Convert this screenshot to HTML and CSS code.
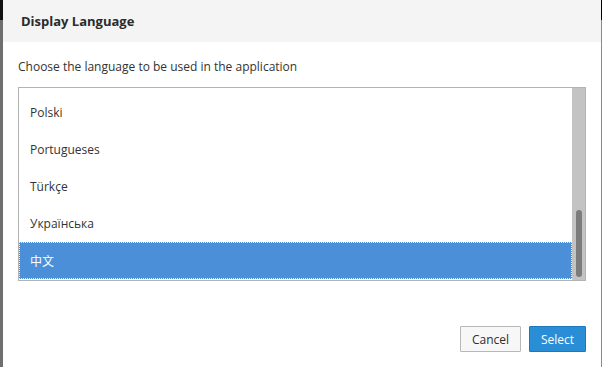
FILE: index.html
```html
<!DOCTYPE html>
<html>
<head>
<meta charset="utf-8">
<link rel="stylesheet" href="styles.css">
</head>
<body>
<div class="screen">
  <div class="edge-left"></div>
  <div class="dialog">
    <div class="header">Display Language</div>
    <div class="content">
      <p class="prompt">Choose the language to be used in the application</p>
      <div class="listbox">
        <ul class="items">
          <li class="item">Polski</li>
          <li class="item">Portugueses</li>
          <li class="item">Türkçe</li>
          <li class="item">Українська</li>
          <li class="item selected">中文</li>
        </ul>
        <div class="scrollbar"><div class="thumb"></div></div>
      </div>
      <div class="actions">
        <button class="btn btn-cancel">Cancel</button>
        <button class="btn btn-primary">Select</button>
      </div>
    </div>
  </div>
  <div class="edge-right"></div>
</div>
</body>
</html>
```
FILE: styles.css
```css
html, body {
  margin: 0;
  padding: 0;
  width: 602px;
  height: 367px;
  overflow: hidden;
  background: #ffffff;
}
.screen {
  display: flex;
  width: 602px;
  height: 367px;
  font-family: "Open Sans", "Noto Sans CJK SC", sans-serif;
  color: #2e3436;
}
.edge-left {
  width: 3px;
  flex: none;
  background: linear-gradient(#111111 0 20px, #6e6e6e 20px);
}
.edge-right {
  width: 1px;
  flex: none;
  background: linear-gradient(#000000 0 20px, #8a8a8a 20px);
}
.dialog {
  flex: 1;
  display: flex;
  flex-direction: column;
  background: #ffffff;
}
.header {
  height: 42px;
  flex: none;
  background: #f4f4f4;
  display: flex;
  align-items: center;
  padding-left: 18px;
  font-weight: 700;
  font-size: 13px;
  color: #2b2b2b;
}
.content {
  flex: 1;
  display: flex;
  flex-direction: column;
  padding: 0 15px 15px 15px;
}
.prompt {
  margin: 16px 0 12px 0;
  font-size: 12px;
  line-height: 17px;
  color: #333333;
}
.listbox {
  height: 192px;
  border: 1px solid #b3b3b3;
  display: flex;
  overflow: hidden;
}
.items {
  flex: 1;
  list-style: none;
  margin: 0;
  padding: 6px 0 0 0;
}
.item {
  height: 37px;
  box-sizing: border-box;
  display: flex;
  align-items: center;
  padding-left: 11px;
  font-size: 12px;
  color: #333333;
}
.item.selected {
  background: #4a8fd8;
  color: #ffffff;
  outline: 1px dotted #e6eef8;
  outline-offset: -1px;
}
.scrollbar {
  width: 12px;
  flex: none;
  background: #c3c3c3;
  display: flex;
  flex-direction: column;
  justify-content: flex-end;
  align-items: center;
  padding: 0 0 3px 1px;
}
.thumb {
  width: 6px;
  height: 67px;
  border-radius: 3px;
  background: #7c7c7c;
}
.actions {
  margin-top: auto;
  display: flex;
  justify-content: flex-end;
  gap: 8px;
}
.btn {
  height: 26px;
  box-sizing: border-box;
  font-family: "Open Sans", sans-serif;
  font-size: 12px;
  padding: 0 6px;
  border-radius: 1px;
}
.btn-cancel {
  width: 61px;
  background: #f7f7f7;
  border: 1px solid #b8b8b8;
  color: #2e2e2e;
}
.btn-primary {
  width: 57px;
  background: #2a8ed6;
  border: 1px solid #1c78bd;
  color: #ffffff;
}
```
